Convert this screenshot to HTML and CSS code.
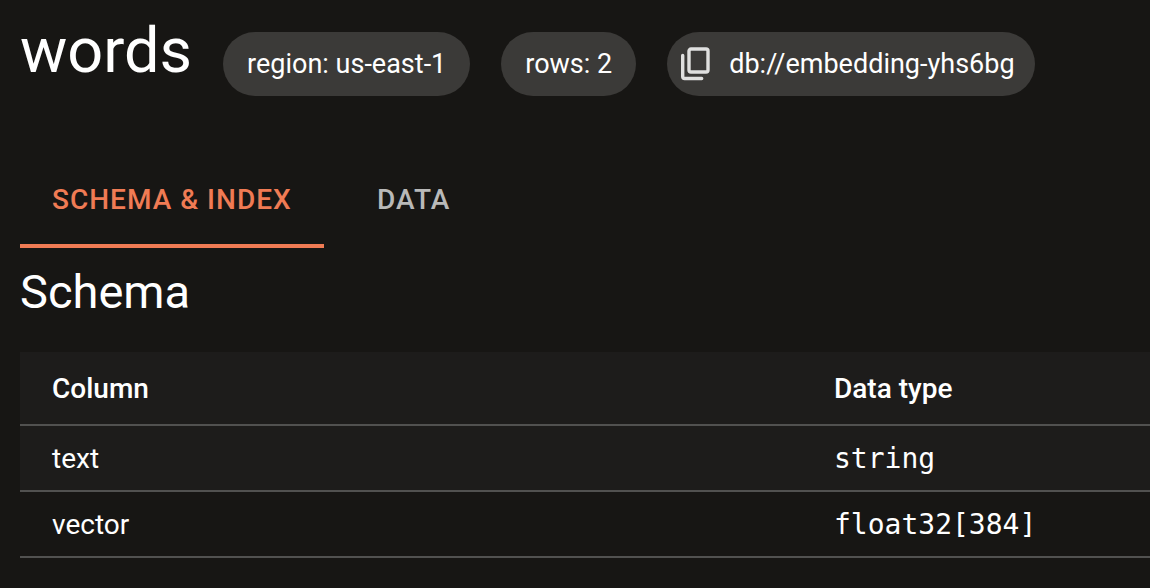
FILE: index.html
```html
<!DOCTYPE html>
<html lang="en">
<head>
<meta charset="utf-8">
<title>words</title>
<link rel="stylesheet" href="styles.css">
</head>
<body>
<main class="page">
  <header class="header">
    <h1 class="title">words</h1>
    <span class="chip">region: us-east-1</span>
    <span class="chip">rows: 2</span>
    <button class="chip chip-copy" type="button">
      <svg class="copy-icon" viewBox="0 0 30 36" aria-hidden="true"><rect x="8" y="3" width="19" height="23" rx="2"/><path d="M1.700 9.500v21q0 2 2 2h17"/></svg>
      <span>db://embedding-yhs6bg</span>
    </button>
  </header>
  <div class="tabs" role="tablist">
    <button class="tab tab-active" type="button" role="tab" aria-selected="true">Schema &amp; Index</button>
    <button class="tab" type="button" role="tab" aria-selected="false">Data</button>
  </div>
  <section>
    <h2 class="subtitle">Schema</h2>
    <table class="schema">
      <thead><tr><th class="col-name">Column</th><th>Data type</th></tr></thead>
      <tbody>
        <tr><td>text</td><td><code>string</code></td></tr>
        <tr><td>vector</td><td><code>float32[384]</code></td></tr>
      </tbody>
    </table>
  </section>
</main>
</body>
</html>
```
FILE: styles.css
```css
* { box-sizing: border-box; }
body {
  margin: 0;
  background: #171614;
  color: #fff;
  font-family: Roboto, sans-serif;
  font-size: 28px;
}
.page { padding: 12px 0 0 20px; }
.header {
  display: flex;
  align-items: flex-start;
  gap: 31px;
  padding-bottom: 56px;
}
.title {
  margin: 0;
  font-size: 63px;
  line-height: 78px;
  font-weight: 400;
}
.chip {
  display: flex;
  align-items: center;
  height: 64px;
  margin-top: 20px;
  padding: 0 24px;
  border: 0;
  border-radius: 32px;
  background: #3b3a38;
  color: #fff;
  font: 400 27px/32px Roboto, sans-serif;
  white-space: nowrap;
}
.chip-copy { padding: 0 20px 0 14px; gap: 18px; }
.copy-icon {
  width: 30px;
  height: 36px;
  fill: none;
  stroke: #e0e0df;
  stroke-width: 3.4;
  stroke-linecap: round;
}
.tabs { display: flex; }
.tab {
  min-width: 180px;
  height: 96px;
  padding: 0 32px;
  border: 0;
  background: none;
  color: #b9b9b8;
  font: 500 28px/36px Roboto, sans-serif;
  letter-spacing: 1px;
  text-transform: uppercase;
}
.tab-active { color: #f07b54; box-shadow: inset 0 -4px #f07b54; }
.subtitle {
  margin: 12px 0 28px;
  font-size: 47px;
  line-height: 64px;
  font-weight: 400;
}
.schema {
  width: 100%;
  border-spacing: 0;
  text-align: left;
}
.schema th, .schema td {
  height: 66px;
  padding: 0 32px;
  border-bottom: 2px solid #515150;
  font-weight: 400;
}
.schema th { height: 74px; font-weight: 500; }
.schema tr { background: #1d1c1b; }
.schema tbody tr:nth-child(even) { background: #171614; }
.schema code { font-family: "DejaVu Sans Mono", monospace; font-size: 28px; }
.schema .col-name { width: 782px; }
```
